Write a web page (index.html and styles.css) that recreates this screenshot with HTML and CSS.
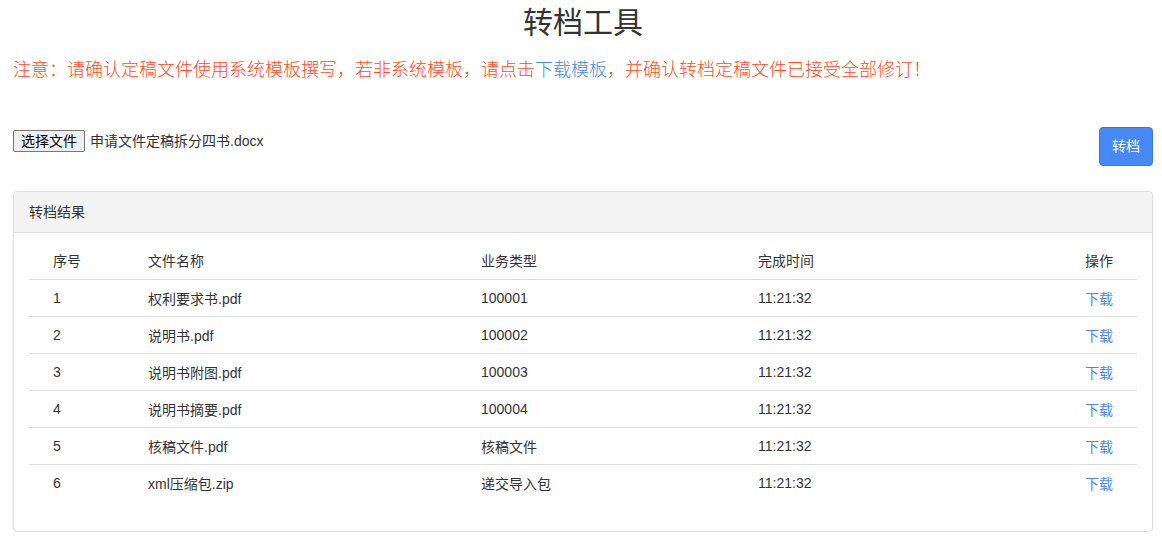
FILE: index.html
```html
<!DOCTYPE html>
<html lang="zh-CN">
<head>
    <meta charset="UTF-8">
    <meta name="viewport" content="width=device-width, initial-scale=1.0">
    <title>转档工具</title>
    <link rel="stylesheet" href="styles.css">
</head>
<body>
    <div class="page">
        <h1 class="title">转档工具</h1>
        <p class="notice">注意：请确认定稿文件使用系统模板撰写，若非系统模板，请点击<a href="#" class="notice-link">下载模板</a>，并确认转档定稿文件已接受全部修订！</p>

        <div class="upload-row">
            <div class="file-picker">
                <button type="button" class="file-btn">选择文件</button>
                <span class="file-name">申请文件定稿拆分四书.docx</span>
            </div>
            <button type="button" class="convert-btn">转档</button>
        </div>

        <div class="panel">
            <div class="panel-heading">转档结果</div>
            <div class="panel-body">
                <table class="result-table">
                    <colgroup>
                        <col style="width: 95px">
                        <col style="width: 333px">
                        <col style="width: 277px">
                        <col>
                        <col style="width: 150px">
                    </colgroup>
                    <thead>
                        <tr>
                            <th>序号</th>
                            <th>文件名称</th>
                            <th>业务类型</th>
                            <th>完成时间</th>
                            <th class="op">操作</th>
                        </tr>
                    </thead>
                    <tbody id="rows"></tbody>
                </table>
            </div>
        </div>
    </div>

    <script>
        const files = [
            { name: "权利要求书.pdf", type: "100001" },
            { name: "说明书.pdf", type: "100002" },
            { name: "说明书附图.pdf", type: "100003" },
            { name: "说明书摘要.pdf", type: "100004" },
            { name: "核稿文件.pdf", type: "核稿文件" },
            { name: "xml压缩包.zip", type: "递交导入包" }
        ];

        const tbody = document.getElementById('rows');
        files.forEach((f, i) => {
            const tr = document.createElement('tr');
            tr.innerHTML =
                '<td>' + (i + 1) + '</td>' +
                '<td>' + f.name + '</td>' +
                '<td>' + f.type + '</td>' +
                '<td>11:21:32</td>' +
                '<td class="op"><a href="#">下载</a></td>';
            tbody.appendChild(tr);
        });
    </script>
</body>
</html>
```

FILE: styles.css
```css
* {
    margin: 0;
    padding: 0;
    box-sizing: border-box;
}

body {
    font-family: "Liberation Sans", "Noto Sans CJK SC", sans-serif;
    font-size: 14px;
    color: #333;
    background: #fff;
}

.page {
    padding: 0 9px 0 13px;
}

.title {
    font-size: 30px;
    font-weight: normal;
    line-height: 46px;
    text-align: center;
    color: #333;
}

.notice {
    margin-top: 11px;
    font-size: 18px;
    font-weight: 300;
    line-height: 26px;
    color: #ff4a1c;
}

.notice-link {
    color: #4a89f0;
    text-decoration: none;
}

.upload-row {
    margin-top: 44px;
    display: flex;
    justify-content: space-between;
    align-items: flex-start;
}

.file-picker {
    margin-top: 3px;
    display: flex;
    align-items: center;
}

.file-btn {
    font-family: inherit;
    font-size: 14px;
    line-height: 18px;
    padding: 1px 7px;
    color: #000;
    background: #efefef;
    border: 1px solid #767676;
    border-radius: 2px;
}

.file-name {
    margin-left: 5px;
    line-height: 18px;
}

.convert-btn {
    font-family: inherit;
    font-size: 14px;
    line-height: 19px;
    padding: 9px 12px;
    color: #fff;
    background: #4689f5;
    border: 1px solid #3a78d6;
    border-radius: 4px;
}

.panel {
    margin-top: 25px;
    border: 1px solid #ddd;
    border-radius: 4px;
    box-shadow: 0 1px 1px rgba(0, 0, 0, 0.05);
}

.panel-heading {
    padding: 0 15px;
    line-height: 40px;
    background: #f4f4f4;
    border-bottom: 1px solid #ddd;
    border-radius: 3px 3px 0 0;
    font-size: 14px;
}

.panel-body {
    padding: 9px 15px 30px;
}

.result-table {
    width: 100%;
    border-collapse: collapse;
    table-layout: fixed;
}

.result-table th,
.result-table td {
    padding: 0 0 0 24px;
    text-align: left;
    font-weight: normal;
    white-space: nowrap;
}

.result-table th {
    height: 37px;
}

.result-table td {
    height: 37px;
    border-top: 1px solid #ddd;
}

.result-table .op {
    text-align: right;
    padding-right: 24px;
}

.result-table a {
    color: #4a89e8;
    text-decoration: none;
}
```
